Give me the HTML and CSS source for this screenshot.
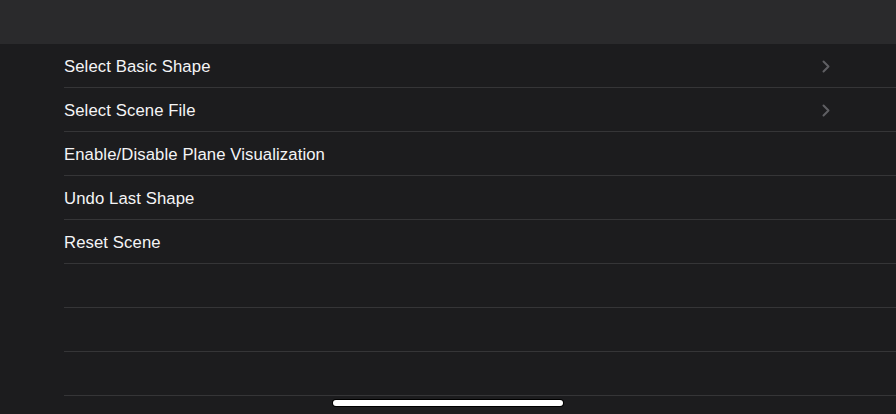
FILE: index.html
```html
<!DOCTYPE html>
<html lang="en">
<head>
<meta charset="utf-8">
<title>Menu</title>
<link rel="stylesheet" href="styles.css">
</head>
<body>
<div class="screen">
  <header class="navbar"></header>
  <ul class="list">
    <li class="row"><span class="label">Select Basic Shape</span>
      <svg class="chevron" width="8" height="13" viewBox="0 0 8 13"><path d="M1.5 1.5 L6.5 6.5 L1.5 11.5" fill="none" stroke="#5f5f63" stroke-width="2" stroke-linecap="round" stroke-linejoin="round"/></svg>
    </li>
    <li class="row"><span class="label">Select Scene File</span>
      <svg class="chevron" width="8" height="13" viewBox="0 0 8 13"><path d="M1.5 1.5 L6.5 6.5 L1.5 11.5" fill="none" stroke="#5f5f63" stroke-width="2" stroke-linecap="round" stroke-linejoin="round"/></svg>
    </li>
    <li class="row"><span class="label">Enable/Disable Plane Visualization</span></li>
    <li class="row"><span class="label">Undo Last Shape</span></li>
    <li class="row"><span class="label">Reset Scene</span></li>
    <li class="row"></li>
    <li class="row"></li>
    <li class="row"></li>
  </ul>
  <div class="home-indicator"></div>
</div>
</body>
</html>
```
FILE: styles.css
```css
html, body {
  margin: 0;
  padding: 0;
  background: #1c1c1e;
}
.screen {
  position: relative;
  width: 896px;
  height: 414px;
  overflow: hidden;
  background: #1c1c1e;
  font-family: "Liberation Sans", Arial, sans-serif;
}
.navbar {
  height: 44px;
  background: #2a2a2c;
}
.list {
  list-style: none;
  margin: 0;
  padding: 0;
}
.row {
  display: flex;
  align-items: center;
  justify-content: space-between;
  height: 43px;
  margin-left: 64px;
  padding-right: 66px;
  border-bottom: 1px solid #353537;
}
.label {
  color: #f4f4f6;
  font-size: 16.7px;
  letter-spacing: 0.1px;
  padding-top: 2px;
}
.chevron {
  display: block;
  margin-top: 1px;
}
.home-indicator {
  position: absolute;
  left: 333px;
  top: 400px;
  width: 230px;
  height: 6px;
  border-radius: 3px;
  background: #ffffff;
  box-shadow: 0 0 0 1px #000;
}
```
